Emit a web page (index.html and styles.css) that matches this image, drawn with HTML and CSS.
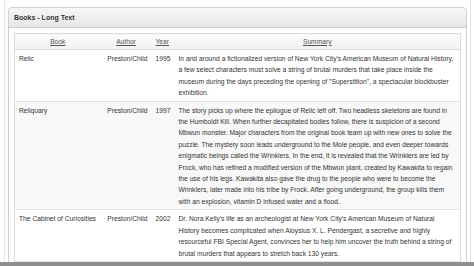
FILE: index.html
```html
<!DOCTYPE html>
<html>
<head>
<meta charset="utf-8">
<link rel="stylesheet" href="styles.css">
</head>
<body>
<div class="page">
  <div class="viewport">
    <div class="frame">
      <section class="panel">
        <header class="panel-head">Books - Long Text</header>
        <div class="panel-body">
          <table class="grid">
            <colgroup>
              <col class="c-book"><col class="c-author"><col class="c-year"><col>
            </colgroup>
            <thead>
              <tr><th><a>Book</a></th><th><a>Author</a></th><th class="year"><a>Year</a></th><th><a>Summary</a></th></tr>
            </thead>
            <tbody>
              <tr>
                <td>Relic</td><td class="author">Preston/Child</td><td>1995</td>
                <td>In and around a fictionalized version of New York City's American Museum of Natural History, a few select characters must solve a string of brutal murders that take place inside the museum during the days preceding the opening of "Superstition", a spectacular blockbuster exhibition.</td>
              </tr>
              <tr class="odd">
                <td>Reliquary</td><td class="author">Preston/Child</td><td>1997</td>
                <td>The story picks up where the epilogue of Relic left off. Two headless skeletons are found in the Humboldt Kill. When further decapitated bodies follow, there is suspicion of a second Mbwun monster. Major characters from the original book team up with new ones to solve the puzzle. The mystery soon leads underground to the Mole people, and even deeper towards enigmatic beings called the Wrinklers. In the end, it is revealed that the Wrinklers are led by Frock, who has refined a modified version of the Mbwun plant, created by Kawakita to regain the use of his legs. Kawakita also gave the drug to the people who were to become the Wrinklers, later made into his tribe by Frock. After going underground, the group kills them with an explosion, vitamin D infused water and a flood.</td>
              </tr>
              <tr>
                <td>The Cabinet of Curiosities</td><td class="author">Preston/Child</td><td>2002</td>
                <td>Dr. Nora Kelly's life as an archeologist at New York City's American Museum of Natural History becomes complicated when Aloysius X. L. Pendergast, a secretive and highly resourceful FBI Special Agent, convinces her to help him uncover the truth behind a string of brutal murders that appears to stretch back 130 years.</td>
              </tr>
              <tr class="odd">
                <td>Still Life with Crows</td><td class="author">Preston/Child</td><td>2003</td>
                <td>Agent Pendergast arrives in Medicine Creek, Kansas, a small town, to investigate a string of bizarre murders.</td>
              </tr>
            </tbody>
          </table>
        </div>
      </section>
    </div>
  </div>
  <div class="bottom-edge"></div>
</div>
</body>
</html>
```
FILE: styles.css
```css
html, body {
  margin: 0;
  padding: 0;
  background: #fff;
}
body {
  font-family: "Liberation Sans", Arial, sans-serif;
  color: #333;
}
.page {
  display: grid;
  grid-template-rows: 1fr 4px;
  height: 266px;
  width: 474px;
  overflow: hidden;
}
.viewport {
  overflow: hidden;
  padding: 0 3px 0 4px;
}
.frame {
  border-left: 1px solid #e6e6e6;
  border-right: 1px solid #e6e6e6;
  padding: 7px 3px 0 3px;
  height: 100%;
  box-sizing: border-box;
}
.panel {
  border: 1px solid #cfcfcf;
  border-radius: 4px;
  background: #fff;
}
.panel-head {
  height: 19px;
  line-height: 19px;
  padding-left: 5px;
  font-size: 7px;
  font-weight: bold;
  color: #333;
  background: linear-gradient(#f7f7f7, #e6e6e6);
  border-bottom: 1px solid #cfcfcf;
  border-radius: 4px 4px 0 0;
}
.panel-body {
  padding: 5px 5px 0 5px;
}
.grid {
  width: 100%;
  border-collapse: collapse;
  table-layout: fixed;
  border: 1px solid #dcdcdc;
  font-size: 6.7px;
  line-height: 11.4px;
}
.c-book { width: 86px; }
.c-author { width: 51px; }
.c-year { width: 23px; }
.grid th {
  font-weight: normal;
  text-align: center;
  height: 15px;
  padding: 0 4px;
  background: linear-gradient(#fbfbfb, #f1f1f1);
  border-bottom: 1px solid #dcdcdc;
}
.grid th.year {
  text-align: left;
}
.grid th a {
  color: #555;
  text-decoration: underline;
}
.grid td {
  vertical-align: top;
  padding: 3px 4px 2px 4px;
  border-top: 1px solid #e4e4e4;
}
.grid td.author {
  text-align: right;
}
.grid tr.odd td {
  background: #f8f8f8;
}
.bottom-edge {
  background: #8f8f8f;
}
```
